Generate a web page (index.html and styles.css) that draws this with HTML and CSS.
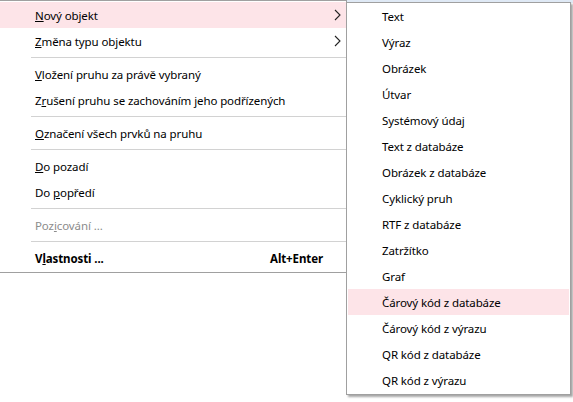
FILE: index.html
```html
<!DOCTYPE html>
<html lang="cs">
<head>
  <meta charset="UTF-8">
  <title>Kontextová nabídka</title>
  <link rel="stylesheet" href="styles.css">
</head>
<body>

<div class="screen">
  <div class="backdrop"></div>

  <!-- Main context menu -->
  <div class="menu main-menu">
    <div class="item active">
      <span class="label"><u>N</u>ový objekt</span>
      <span class="shortcut"></span>
      <span class="arrow"><svg width="7" height="12" viewBox="0 0 7 12"><polyline points="1,1 6,6 1,11" fill="none" stroke="#222" stroke-width="1.1"/></svg></span>
    </div>
    <div class="item">
      <span class="label"><u>Z</u>měna typu objektu</span>
      <span class="shortcut"></span>
      <span class="arrow"><svg width="7" height="12" viewBox="0 0 7 12"><polyline points="1,1 6,6 1,11" fill="none" stroke="#222" stroke-width="1.1"/></svg></span>
    </div>
    <div class="separator"></div>
    <div class="item">
      <span class="label"><u>V</u>ložení pruhu za právě vybraný</span>
    </div>
    <div class="item">
      <span class="label">Z<u>r</u>ušení pruhu se zachováním jeho podřízených</span>
    </div>
    <div class="separator"></div>
    <div class="item">
      <span class="label"><u>O</u>značení všech prvků na pruhu</span>
    </div>
    <div class="separator"></div>
    <div class="item">
      <span class="label"><u>D</u>o pozadí</span>
    </div>
    <div class="item">
      <span class="label">Do <u>p</u>opředí</span>
    </div>
    <div class="separator"></div>
    <div class="item disabled">
      <span class="label">Poz<u>i</u>cování ...</span>
    </div>
    <div class="separator"></div>
    <div class="item bold">
      <span class="label">V<u>l</u>astnosti ...</span>
      <span class="shortcut">Alt+Enter</span>
      <span class="arrow"></span>
    </div>
  </div>

  <!-- Submenu: Nový objekt -->
  <div class="menu sub-menu">
    <div class="item">Text</div>
    <div class="item">Výraz</div>
    <div class="item">Obrázek</div>
    <div class="item">Útvar</div>
    <div class="item">Systémový údaj</div>
    <div class="item">Text z databáze</div>
    <div class="item">Obrázek z databáze</div>
    <div class="item">Cyklický pruh</div>
    <div class="item">RTF z databáze</div>
    <div class="item">Zatržítko</div>
    <div class="item">Graf</div>
    <div class="item active">Čárový kód z databáze</div>
    <div class="item">Čárový kód z výrazu</div>
    <div class="item">QR kód z databáze</div>
    <div class="item">QR kód z výrazu</div>
  </div>
</div>

</body>
</html>
```

FILE: styles.css
```css
body {
  margin: 0;
  background-color: #fff;
  font-family: "Noto Sans", "Open Sans", sans-serif;
  font-size: 11.5px;
  letter-spacing: -0.1px;
  color: #000;
}

.screen {
  position: relative;
  width: 573px;
  height: 402px;
  overflow: hidden;
}

.backdrop {
  height: 3px;
  background-color: #dfe9f5;
}

.menu {
  position: absolute;
  background-color: #fff;
  border: 1px solid #a0a0a0;
}

.main-menu {
  left: -1px;
  top: 0;
  width: 346px;
  padding: 1px 0;
}

.main-menu .item {
  display: grid;
  grid-template-columns: 1fr auto 23px;
  align-items: center;
  height: 26px;
  padding-left: 35px;
}

.main-menu .arrow {
  display: flex;
  justify-content: flex-end;
  padding-right: 5px;
}

.main-menu .arrow svg {
  display: block;
}

.item.active {
  background-color: #fde4e8;
}

.item.disabled {
  color: #8c8c8c;
}

.item.bold {
  font-weight: bold;
}

.label {
  white-space: nowrap;
}

.separator {
  height: 7px;
  display: flex;
  align-items: center;
  margin-left: 31px;
}

.separator::after {
  content: "";
  flex: 1;
  height: 1px;
  background-color: #d2d2d2;
}

.sub-menu {
  left: 346px;
  top: 2px;
  width: 221px;
  padding: 0 1px 1px;
  box-shadow: 2px 2px 2px rgba(0, 0, 0, 0.35);
}

.sub-menu .item {
  display: flex;
  align-items: center;
  height: 26px;
  padding-left: 34px;
  white-space: nowrap;
}
```
